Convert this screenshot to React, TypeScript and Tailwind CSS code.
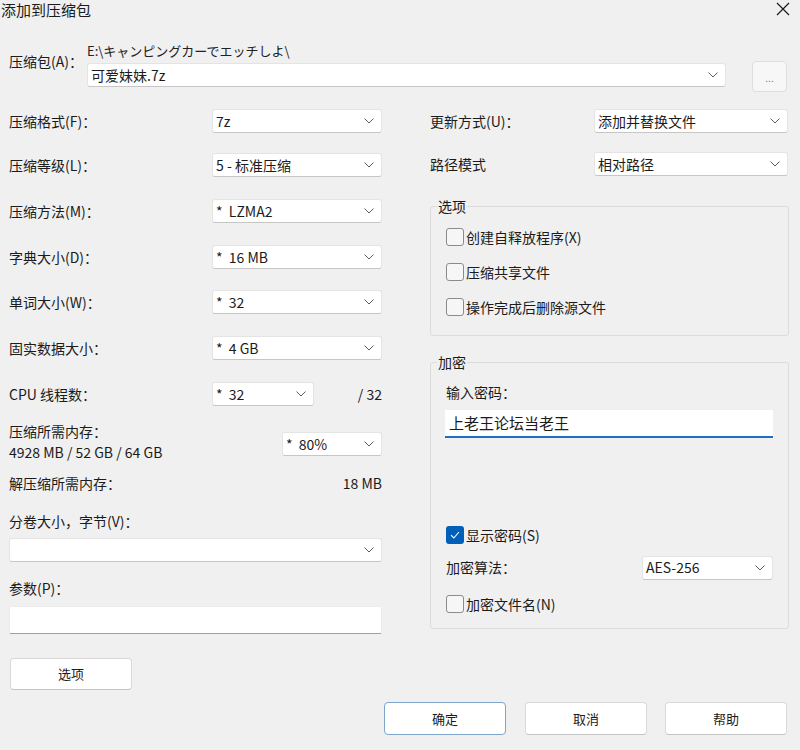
import React from "react";

const FONT = "font-['Noto_Sans_CJK_SC','Noto_Sans',sans-serif]";

function Chevron() {
  return (
    <svg width="10" height="6" viewBox="0 0 10 6" className="shrink-0">
      <path d="M0.5 0.5 L5 5 L9.5 0.5" fill="none" stroke="#5c5c5c" strokeWidth="1" />
    </svg>
  );
}

function Combo({ value, className = "" }: { value?: string; className?: string }) {
  return (
    <div
      className={`flex h-[24px] items-center justify-between rounded-[3px] border border-[#e4e4e4] border-b-[#c6c6c6] bg-white pl-[3px] pr-[7px] text-[14px] text-[#1b1b1b] ${className}`}
    >
      <span className="whitespace-pre">{value}</span>
      <Chevron />
    </div>
  );
}

function Check({ checked = false, label }: { checked?: boolean; label: string }) {
  return (
    <div className="flex h-[20px] items-center gap-[2px]">
      {checked ? (
        <span className="flex h-[18px] w-[18px] items-center justify-center rounded-[3px] bg-[#005fb8]">
          <svg width="10" height="8" viewBox="0 0 10 8">
            <path d="M1 4.2 L3.8 7 L9 1" fill="none" stroke="#fff" strokeWidth="1.1" />
          </svg>
        </span>
      ) : (
        <span className="h-[18px] w-[18px] rounded-[3px] border border-[#8b8b8b] bg-[#f6f6f6]" />
      )}
      <span>{label}</span>
    </div>
  );
}

function Group({ title, className = "", children }: { title: string; className?: string; children: React.ReactNode }) {
  return (
    <div className={`relative rounded-[3px] border border-[#dcdcdc] ${className}`}>
      <span className="absolute -top-[11px] left-[6px] bg-[#f0f0f0] px-px leading-[20px]">{title}</span>
      {children}
    </div>
  );
}

function Button({ label, focus = false }: { label: string; focus?: boolean }) {
  return (
    <button
      type="button"
      className={`flex h-[33px] w-[122px] items-center justify-center rounded-[4px] border bg-white text-[13px] text-[#1b1b1b] ${
        focus ? "border-[#7ea6cc]" : "border-[#d9d9d9] border-b-[#c4c4c4]"
      }`}
    >
      {label}
    </button>
  );
}

const leftRows = [
  { label: "压缩格式(F)：", value: "7z", mt: "mt-0" },
  { label: "压缩等级(L)：", value: "5 - 标准压缩", mt: "mt-[20px]" },
  { label: "压缩方法(M)：", value: "*  LZMA2", mt: "mt-[22px]" },
  { label: "字典大小(D)：", value: "*  16 MB", mt: "mt-[22px]" },
  { label: "单词大小(W)：", value: "*  32", mt: "mt-[21px]" },
  { label: "固实数据大小：", value: "*  4 GB", mt: "mt-[22px]" },
];

export default function App() {
  return (
    <div className={`h-[750px] w-[800px] overflow-hidden bg-[#f0f0f0] text-[14px] text-[#1b1b1b] ${FONT}`}>
      {/* title bar */}
      <div className="flex h-[22px] items-start justify-between pl-px">
        <span className="text-[15px] leading-[19px]">添加到压缩包</span>
        <svg width="14" height="14" viewBox="0 0 14 14" className="mr-[10px] mt-[2px]">
          <path d="M1 1 L13 13 M13 1 L1 13" fill="none" stroke="#1b1b1b" strokeWidth="1.2" />
        </svg>
      </div>

      {/* archive row */}
      <div className="mt-[19px] flex items-start pl-[9px]">
        <span className="mt-[10px] w-[78px] leading-[20px]">压缩包(A)：</span>
        <div className="flex w-[639px] flex-col">
          <span className="h-[20px] font-['Noto_Sans_CJK_JP',sans-serif] text-[13px] leading-[20px] text-[#222]">
            E:\キャンピングカーでエッチしよ\
          </span>
          <Combo value="可爱妹妹.7z" className="mt-[2px] border-[#d6d6d6] border-b-[#a9a9a9]" />
        </div>
        <button
          type="button"
          className="ml-[26px] mt-[20px] flex h-[31px] w-[35px] items-end justify-center rounded-[4px] border border-[#dedede] bg-[#f7f7f7] pb-[8px] text-[10px] leading-none text-[#777]"
        >
          ...
        </button>
      </div>

      {/* main */}
      <div className="mt-[17px] flex items-start">
        {/* left column */}
        <div className="ml-[9px] flex w-[373px] flex-col">
          {leftRows.map((r) => (
            <div key={r.label} className={`flex h-[24px] items-center justify-between ${r.mt}`}>
              <span>{r.label}</span>
              <Combo value={r.value} className="w-[170px]" />
            </div>
          ))}
          <div className="mt-[22px] flex h-[24px] items-center">
            <span className="w-[203px]">CPU 线程数：</span>
            <Combo value="*  32" className="w-[102px]" />
            <span className="ml-auto">/ 32</span>
          </div>

          <div className="mt-[15px] flex items-start justify-between">
            <div className="flex flex-col leading-[21px]">
              <span>压缩所需内存：</span>
              <span>4928 MB / 52 GB / 64 GB</span>
            </div>
            <Combo value="*  80%" className="mt-[11px] h-[23px] w-[100px]" />
          </div>

          <div className="mt-[10px] flex justify-between leading-[21px]">
            <span>解压缩所需内存：</span>
            <span>18 MB</span>
          </div>

          <span className="mt-[17px] leading-[21px]">分卷大小，字节(V)：</span>
          <Combo className="mt-[6px] h-[23px] border-[#b9b9b9] border-b-[#a5a5a5]" />

          <span className="mt-[16px] leading-[21px]">参数(P)：</span>
          <div className="mt-[7px] h-[28px] rounded-[2px] border border-[#ececec] border-b-[#9f9f9f] bg-white" />

          <div className="ml-px mt-[24px]">
            <button
              type="button"
              className="flex h-[32px] w-[122px] items-center justify-center rounded-[4px] border border-[#d9d9d9] border-b-[#c4c4c4] bg-white text-[13px]"
            >
              选项
            </button>
          </div>
        </div>

        {/* right column */}
        <div className="ml-[48px] flex w-[359px] flex-col">
          <div className="flex h-[24px] items-center justify-between pr-px">
            <span>更新方式(U)：</span>
            <Combo value="添加并替换文件" className="w-[194px]" />
          </div>
          <div className="mt-[19px] flex h-[24px] items-center justify-between pr-px">
            <span>路径模式</span>
            <Combo value="相对路径" className="w-[194px]" />
          </div>

          <Group title="选项" className="mt-[30px] h-[130px]">
            <div className="flex flex-col gap-[15px] pl-[15px] pt-[20px]">
              <Check label="创建自释放程序(X)" />
              <Check label="压缩共享文件" />
              <Check label="操作完成后删除源文件" />
            </div>
          </Group>

          <Group title="加密" className="mt-[26px] h-[267px]">
            <div className="flex flex-col pl-[15px] pr-[15px] pt-[19px]">
              <span className="leading-[20px]">输入密码：</span>
              <div className="-ml-px mt-[8px] flex h-[28px] items-center border-b-2 border-[#1f6ec2] bg-white pl-[4px] text-[15px]">
                上老王论坛当老王
              </div>
              <div className="mt-[87px]">
                <Check checked label="显示密码(S)" />
              </div>
              <div className="mt-[11px] flex h-[23px] items-center justify-between">
                <span>加密算法：</span>
                <Combo value="AES-256" className="h-[23px] w-[131px]" />
              </div>
              <div className="mt-[15px]">
                <Check label="加密文件名(N)" />
              </div>
            </div>
          </Group>
        </div>
      </div>

      {/* bottom buttons */}
      <div className="mt-[12px] flex justify-end pr-[13px]">
        <Button label="确定" focus />
        <div className="ml-[19px]">
          <Button label="取消" />
        </div>
        <div className="ml-[18px]">
          <Button label="帮助" />
        </div>
      </div>
    </div>
  );
}
